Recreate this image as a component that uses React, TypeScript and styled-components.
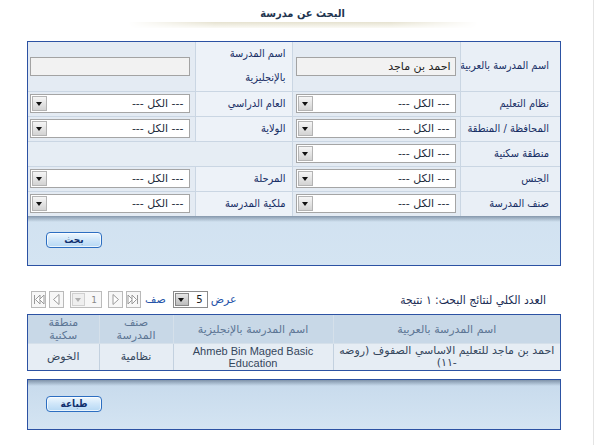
import React from 'react';
import styled, { createGlobalStyle } from 'styled-components';

// Page-wide reset
const GlobalStyle = createGlobalStyle`
  html, body {
    margin: 0;
    padding: 0;
    background: #ffffff;
  }
  body {
    font-family: "Liberation Sans", "DejaVu Sans", sans-serif;
  }
`;

const ARABIC_FONT = `"DejaVu Sans", "Liberation Sans", sans-serif`;
const LABEL_FONT = `"DejaVu Sans Condensed", "DejaVu Sans", sans-serif`;

interface FieldRow {
  label: React.ReactNode;
  field: React.ReactNode;
  label2?: React.ReactNode;
  field2?: React.ReactNode;
}

const ALL = '--- الكل ---';

const SelectField: React.FC<{ value?: string }> = ({ value = ALL }) => (
  <SelectBox>
    <SelectText>{value}</SelectText>
    <DropButton />
  </SelectBox>
);

function TextField({ value }: { value: string }) {
  return <TextInput type="text" defaultValue={value} readOnly />;
}

const rows: FieldRow[] = [
  {
    label: 'اسم المدرسة بالعربية',
    field: <TextField value="احمد بن ماجد" />,
    label2: (
      <>
        اسم المدرسة
        <br />
        بالإنجليزية
      </>
    ),
    field2: <TextField value="" />,
  },
  { label: 'نظام التعليم', field: <SelectField />, label2: 'العام الدراسي', field2: <SelectField /> },
  { label: 'المحافظة / المنطقة', field: <SelectField />, label2: 'الولاية', field2: <SelectField /> },
  { label: 'منطقة سكنية', field: <SelectField /> },
  { label: 'الجنس', field: <SelectField />, label2: 'المرحلة', field2: <SelectField /> },
  { label: 'صنف المدرسة', field: <SelectField />, label2: 'ملكية المدرسة', field2: <SelectField /> },
];

// Small pager icons (first / prev / next / last)
const PagerIcon: React.FC<{ kind: 'first' | 'prev' | 'next' | 'last' }> = ({ kind }) => {
  const stroke = '#9a9a9a';
  return (
    <PagerBox>
      <svg width="13" height="15" viewBox="0 0 13 15">
        {kind === 'first' && (
          <>
            <line x1="2.5" y1="3" x2="2.5" y2="12" stroke={stroke} />
            <polygon points="8,3 3.5,7.5 8,12" fill="#fff" stroke={stroke} />
            <polygon points="12,3 7.5,7.5 12,12" fill="#fff" stroke={stroke} />
          </>
        )}
        {kind === 'prev' && <polygon points="9,2.5 3.5,7.5 9,12.5" fill="#fff" stroke={stroke} />}
        {kind === 'next' && <polygon points="4,2.5 9.5,7.5 4,12.5" fill="#fff" stroke={stroke} />}
        {kind === 'last' && (
          <>
            <polygon points="1,3 5.5,7.5 1,12" fill="#fff" stroke={stroke} />
            <polygon points="5,3 9.5,7.5 5,12" fill="#fff" stroke={stroke} />
            <line x1="10.5" y1="3" x2="10.5" y2="12" stroke={stroke} />
          </>
        )}
      </svg>
    </PagerBox>
  );
};

const App: React.FC = () => {
  return (
    <>
      <GlobalStyle />
      <Page>
        <TitleBar>
          <Title>البحث عن مدرسة</Title>
          <TitleBand />
        </TitleBar>

        <Panel>
          <FormTable>
            <colgroup>
              <col style={{ width: 100 }} />
              <col style={{ width: 168 }} />
              <col style={{ width: 97 }} />
              <col style={{ width: 167 }} />
            </colgroup>
            <tbody>
              {rows.map((row, i) => (
                <FormRow key={i} $tall={i === 0}>
                  <LabelCell>{row.label}</LabelCell>
                  <FieldCell>{row.field}</FieldCell>
                  {row.label2 ? (
                    <>
                      <Label2Cell $tall={i === 0}>{row.label2}</Label2Cell>
                      <FieldCell $left>{row.field2}</FieldCell>
                    </>
                  ) : (
                    <EmptyCell colSpan={2} />
                  )}
                </FormRow>
              ))}
            </tbody>
          </FormTable>
          <PanelShadow />
          <ButtonBar>
            <ActionButton>بحث</ActionButton>
          </ButtonBar>
        </Panel>

        <PagerRow>
          <ResultCount>العدد الكلي لنتائج البحث: ١ نتيجة</ResultCount>
          <Pager>
            <PagerText>عرض</PagerText>
            <RowsSelect>
              <RowsValue>5</RowsValue>
              <RowsDrop />
            </RowsSelect>
            <PagerText $gap>صف</PagerText>
            <PagerIcon kind="last" />
            <PagerIcon kind="next" />
            <PageBox>
              <PageNumber>1</PageNumber>
              <PageDrop />
            </PageBox>
            <PagerIcon kind="prev" />
            <PagerIcon kind="first" />
          </Pager>
        </PagerRow>

        <ResultsBox>
          <ResultsTable>
            <colgroup>
              <col style={{ width: 227 }} />
              <col style={{ width: 160 }} />
              <col style={{ width: 74 }} />
              <col style={{ width: 71 }} />
            </colgroup>
            <thead>
              <tr>
                <HeadCell>اسم المدرسة بالعربية</HeadCell>
                <HeadCell>اسم المدرسة بالإنجليزية</HeadCell>
                <HeadCell>
                  صنف
                  <br />
                  المدرسة
                </HeadCell>
                <HeadCell>
                  منطقة
                  <br />
                  سكنية
                </HeadCell>
              </tr>
            </thead>
            <tbody>
              <tr>
                <DataCell>احمد بن ماجد للتعليم الاساسي الصفوف (روضه -١١)</DataCell>
                <DataCell dir="ltr">Ahmeb Bin Maged Basic Education</DataCell>
                <DataCell>نظامية</DataCell>
                <DataCell>الخوض</DataCell>
              </tr>
            </tbody>
          </ResultsTable>
        </ResultsBox>

        <Panel $print>
          <PanelShadow />
          <ButtonBar>
            <ActionButton>طباعة</ActionButton>
          </ButtonBar>
        </Panel>
      </Page>
    </>
  );
};

// Styled components
const Page = styled.div`
  direction: rtl;
  width: 593px;
  height: 445px;
  border-right: 1px solid #e4e4e4;
  overflow: hidden;
  font-family: ${ARABIC_FONT};
`;

const TitleBar = styled.div`
  height: 41px;
  padding-top: 5px;
  padding-left: 12px;
  box-sizing: border-box;
`;

const Title = styled.div`
  text-align: center;
  font-family: ${LABEL_FONT};
  font-size: 11px;
  font-weight: bold;
  line-height: 17px;
  color: #22344f;
`;

const TitleBand = styled.div`
  width: 350px;
  height: 6px;
  margin: 0 auto;
  background: linear-gradient(to bottom, #e6e2d0, #fbfaf5);
  -webkit-mask-image: linear-gradient(to right, transparent, #000 25%, #000 75%, transparent);
  mask-image: linear-gradient(to right, transparent, #000 25%, #000 75%, transparent);
`;

const Panel = styled.div<{ $print?: boolean }>`
  width: 534px;
  box-sizing: border-box;
  margin: ${(p) => (p.$print ? '8px' : '0')} 32px 0 27px;
  border: 1px solid #2c52a3;
  background: linear-gradient(to bottom, #c7daec, #d4e4f2);
`;

const FormTable = styled.table`
  width: 532px;
  border-collapse: collapse;
  border-style: hidden;
  table-layout: fixed;
`;

const FormRow = styled.tr<{ $tall?: boolean }>`
  height: ${(p) => (p.$tall ? '49px' : '25px')};
`;

const LabelCell = styled.td`
  border: 1px solid #cad6e3;
  background: #e9eff6;
  padding: 0 11px 0 0;
  text-align: right;
  font-family: ${LABEL_FONT};
  font-size: 11px;
  line-height: 14px;
  color: #182f66;
  white-space: nowrap;
  overflow: hidden;
`;

const Label2Cell = styled(LabelCell)<{ $tall?: boolean }>`
  padding: 0 6px 0 0;
  line-height: ${(p) => (p.$tall ? '24px' : '14px')};
  background: #edf2f8;
`;

const FieldCell = styled.td<{ $left?: boolean }>`
  border: 1px solid #cad6e3;
  background: #e4ebf3;
  padding: 0 ${(p) => (p.$left ? '5px' : '4px')} 0 0;
  line-height: 14px;
  vertical-align: middle;
`;

const EmptyCell = styled.td`
  border: 1px solid #cad6e3;
  background: #e6edf4;
  padding: 0;
`;

const TextInput = styled.input`
  display: block;
  width: 160px;
  height: 19px;
  box-sizing: border-box;
  margin: 0;
  padding: 0 4px;
  border: 1px solid #a3a3a3;
  background: #f2f2f2;
  font-family: ${ARABIC_FONT};
  font-size: 11px;
  color: #222;
  direction: rtl;
  outline: none;
`;

const SelectBox = styled.div`
  display: flex;
  align-items: center;
  width: 160px;
  height: 19px;
  box-sizing: border-box;
  border: 1px solid #a5a5a5;
  background: #ffffff;
`;

const SelectText = styled.span`
  flex: 1;
  padding-right: 5px;
  font-size: 11px;
  color: #222a3a;
  white-space: nowrap;
`;

const DropButton = styled.span`
  position: relative;
  width: 15px;
  height: 15px;
  margin-left: 1px;
  box-sizing: border-box;
  border: 1px solid #b4b4b4;
  background: linear-gradient(to bottom, #f6f6f6, #d3d3d3);

  &::after {
    content: '';
    position: absolute;
    left: 3px;
    top: 5px;
    border-left: 3.5px solid transparent;
    border-right: 3.5px solid transparent;
    border-top: 4px solid #111;
  }
`;

const PanelShadow = styled.div`
  height: 6px;
  background: linear-gradient(to bottom, rgba(70, 90, 115, 0.55), rgba(120, 145, 170, 0));
`;

const ButtonBar = styled.div`
  display: flex;
  justify-content: flex-start;
  direction: ltr;
  padding: 10px 0 17px 18px;
`;

const ActionButton = styled.button`
  width: 56px;
  height: 16px;
  padding: 0;
  border: 1px solid #2c6ec1;
  border-radius: 4px;
  background: linear-gradient(to bottom, #eef7fe, #cfe6f9 50%, #b6d8f4);
  box-shadow: inset 0 0 0 1px rgba(255, 255, 255, 0.7);
  font-family: ${LABEL_FONT};
  font-size: 10px;
  font-weight: bold;
  line-height: 14px;
  color: #0f2f6e;
  direction: rtl;
`;

const PagerRow = styled.div`
  display: flex;
  justify-content: space-between;
  align-items: center;
  width: 534px;
  height: 19px;
  margin: 24px 32px 0 27px;
  box-sizing: border-box;
  padding: 0 15px 0 4px;
`;

const ResultCount = styled.div`
  font-family: ${LABEL_FONT};
  font-size: 12px;
  color: #1c2d55;
  white-space: nowrap;
`;

const Pager = styled.div`
  display: flex;
  align-items: center;
  gap: 3px;
`;

const PagerText = styled.span<{ $gap?: boolean }>`
  font-size: 11px;
  color: #2453a8;
  margin-left: ${(p) => (p.$gap ? '1px' : '0')};
  margin-right: ${(p) => (p.$gap ? '4px' : '0')};
`;

const PagerBox = styled.span`
  display: flex;
  align-items: center;
  justify-content: center;
  width: 15px;
  height: 17px;
  box-sizing: border-box;
  border: 1px solid #b9b9b9;
  background: #f7f7f7;
`;

const RowsSelect = styled.div`
  display: flex;
  align-items: center;
  width: 35px;
  height: 17px;
  box-sizing: border-box;
  border: 1px solid #8c8c8c;
  background: #fff;
`;

const RowsValue = styled.span`
  flex: 1;
  padding-right: 4px;
  font-family: "DejaVu Sans", sans-serif;
  font-size: 10px;
  color: #222;
`;

const RowsDrop = styled(DropButton)`
  width: 14px;
  height: 13px;
  border-color: #888;
  background: linear-gradient(to bottom, #e6e6e6, #bdbdbd);

  &::after {
    left: 2.5px;
    top: 4px;
  }
`;

const PageBox = styled.div`
  display: flex;
  align-items: center;
  width: 32px;
  height: 17px;
  box-sizing: border-box;
  border: 1px solid #bbbbbb;
  background: #f7f7f7;
  margin: 0 3px;
`;

const PageNumber = styled.span`
  flex: 1;
  padding-right: 4px;
  font-family: "DejaVu Sans", sans-serif;
  font-size: 9px;
  color: #888;
`;

const PageDrop = styled(DropButton)`
  width: 13px;
  height: 13px;
  border-color: #d0d0d0;
  background: #efefef;

  &::after {
    left: 2px;
    top: 4px;
    border-top-color: #b0b0b0;
  }
`;

const ResultsBox = styled.div`
  width: 534px;
  box-sizing: border-box;
  margin: 5px 32px 0 27px;
  border: 1px solid #2c52a3;
`;

const ResultsTable = styled.table`
  width: 532px;
  border-collapse: collapse;
  border-style: hidden;
  table-layout: fixed;
`;

const HeadCell = styled.th`
  height: 28px;
  padding: 0;
  border: 1px solid #d5e0ea;
  background: #c8d8e7;
  font-size: 11px;
  font-weight: normal;
  line-height: 13px;
  color: #5c7594;
  text-align: center;
`;

const DataCell = styled.td`
  height: 26px;
  padding: 0 4px;
  border: 1px solid #c3d1df;
  background: #e6edf4;
  font-family: ${ARABIC_FONT};
  font-size: 11px;
  line-height: 12px;
  color: #34465c;
  text-align: center;

  &[dir='ltr'] {
    font-family: "Liberation Sans", sans-serif;
    font-size: 11px;
  }
`;

export default App;
